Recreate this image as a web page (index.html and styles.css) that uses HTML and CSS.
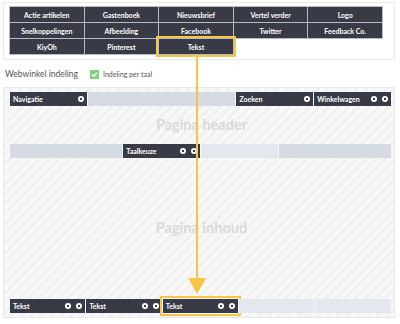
FILE: index.html
```html
<!DOCTYPE html>
<html lang="nl">
<head>
    <meta charset="UTF-8">
    <meta name="viewport" content="width=device-width, initial-scale=1.0">
    <title>Webwinkel indeling</title>
    <link rel="stylesheet" href="styles.css">
</head>
<body>
    <div class="block-panel">
        <div class="block-grid">
            <div class="block">Actie artikelen</div>
            <div class="block">Gastenboek</div>
            <div class="block">Nieuwsbrief</div>
            <div class="block">Vertel verder</div>
            <div class="block">Logo</div>
            <div class="block">Snelkoppelingen</div>
            <div class="block">Afbeelding</div>
            <div class="block">Facebook</div>
            <div class="block">Twitter</div>
            <div class="block">Feedback Co.</div>
            <div class="block">KiyOh</div>
            <div class="block">Pinterest</div>
            <div class="block block-picked">Tekst</div>
        </div>
    </div>

    <div class="layout-head">
        <h2 class="layout-title">Webwinkel indeling</h2>
        <label class="check-label"><span class="check-box">
            <svg width="9" height="9" viewBox="0 0 9 9"><path d="M2 4.6 L3.8 6.3 L7 2.8" fill="none" stroke="#fff" stroke-width="1.5"/></svg>
        </span>Indeling per taal</label>
    </div>

    <div class="layout-box">
        <div class="zone-row">
            <div class="slot slot-filled w1"><span>Navigatie</span><span class="icons"><i class="gear"></i></span></div>
            <div class="slot w2"></div>
            <div class="slot slot-filled w1"><span>Zoeken</span><span class="icons"><i class="gear"></i></span></div>
            <div class="slot slot-filled w1"><span>Winkelwagen</span><span class="icons"><i class="gear"></i><i class="gear"></i></span></div>
        </div>
        <div class="zone-label">Pagina header</div>
        <div class="zone-row zone-row-mid">
            <div class="slot w15"></div>
            <div class="slot slot-filled w1"><span>Taalkeuze</span><span class="icons"><i class="gear"></i><i class="gear"></i></span></div>
            <div class="slot slot-pale w1"></div>
            <div class="slot w15"></div>
        </div>
        <div class="zone-label zone-label-low">Pagina inhoud</div>
        <div class="zone-row zone-row-bottom">
            <div class="slot slot-filled w1"><span>Tekst</span><span class="icons"><i class="gear"></i><i class="gear"></i></span></div>
            <div class="slot slot-filled w1"><span>Tekst</span><span class="icons"><i class="gear"></i><i class="gear"></i></span></div>
            <div class="slot slot-filled slot-picked w1"><span>Tekst</span><span class="icons"><i class="gear"></i><i class="gear"></i></span></div>
            <div class="slot slot-pale w1"></div>
            <div class="slot slot-pale w1"></div>
        </div>
    </div>

    <!-- drag hint arrow -->
    <svg class="drag-arrow" width="400" height="324" viewBox="0 0 400 324">
        <line x1="197" y1="56" x2="197" y2="280" stroke="#f6c544" stroke-width="2"/>
        <polygon points="188,278 206,278 197,294" fill="#f6c544"/>
    </svg>
</body>
</html>
```

FILE: styles.css
```css
body {
    margin: 0;
    background-color: #ffffff;
    font-family: Lato, "Open Sans", sans-serif;
    position: relative;
}

.block-panel {
    margin: 2px 5px 0 3px;
    border: 1px solid #e9e9e9;
    padding: 4px 12px 5px 6px;
}

.block-grid {
    display: grid;
    grid-template-columns: repeat(5, 1fr);
    grid-auto-rows: 15px;
    gap: 1px;
}

.block {
    background-color: #383b46;
    box-shadow: 0 0 0 1px #b9bbc1;
    color: #ffffff;
    font-size: 7px;
    font-weight: 700;
    display: flex;
    align-items: center;
    justify-content: center;
}

.block-picked {
    outline: 2px solid #f6c544;
    outline-offset: 1px;
}

.layout-head {
    display: flex;
    align-items: center;
    height: 14px;
    margin: 7px 0 0 5px;
}

.layout-title {
    margin: 0;
    font-size: 8.5px;
    font-weight: 400;
    color: #555555;
    width: 85px;
}

.check-label {
    display: flex;
    align-items: center;
    font-size: 7px;
    color: #555555;
}

.check-box {
    width: 9px;
    height: 9px;
    background-color: #7fd27e;
    margin-right: 4px;
    display: flex;
}

.layout-box {
    margin: 6px 5px 0 3px;
    border: 1px solid #e8e8e8;
    padding: 4px 3px 4px 6px;
    height: 221px;
    display: flex;
    flex-direction: column;
    background: repeating-linear-gradient(-45deg, #f8f8f8 0, #f8f8f8 4px, #f1f1f1 4px, #f1f1f1 7px);
}

.zone-row {
    display: flex;
    height: 14px;
    gap: 1px;
}

.zone-row-mid {
    margin-top: 11px;
}

.zone-row-bottom {
    margin-top: auto;
}

.slot {
    background-color: #d6dae3;
    display: flex;
    align-items: center;
    justify-content: space-between;
    padding: 0 3px;
    box-sizing: border-box;
    font-size: 7px;
    font-weight: 700;
    color: #ffffff;
}

.slot-filled {
    background-color: #383b46;
}

.slot-pale {
    background-color: #e4e7ed;
}

.slot-picked {
    outline: 2px solid #f6c544;
    outline-offset: 1px;
}

.w1 { flex: 1 1 0; }
.w15 { flex: 1.5 1 0; }
.w2 { flex: 2 1 0; }

.icons {
    display: flex;
    gap: 5px;
}

.gear {
    width: 6px;
    height: 6px;
    border-radius: 50%;
    background: radial-gradient(circle, #383b46 0.9px, #ffffff 1.4px);
}

.zone-label {
    margin-top: 11px;
    text-align: center;
    font-size: 14.5px;
    line-height: 16px;
    font-weight: 700;
    color: #d9d9d9;
    padding-left: 2px;
}

.zone-label-low {
    margin-top: 62px;
}

.drag-arrow {
    position: absolute;
    left: 0;
    top: 0;
    pointer-events: none;
}
```
